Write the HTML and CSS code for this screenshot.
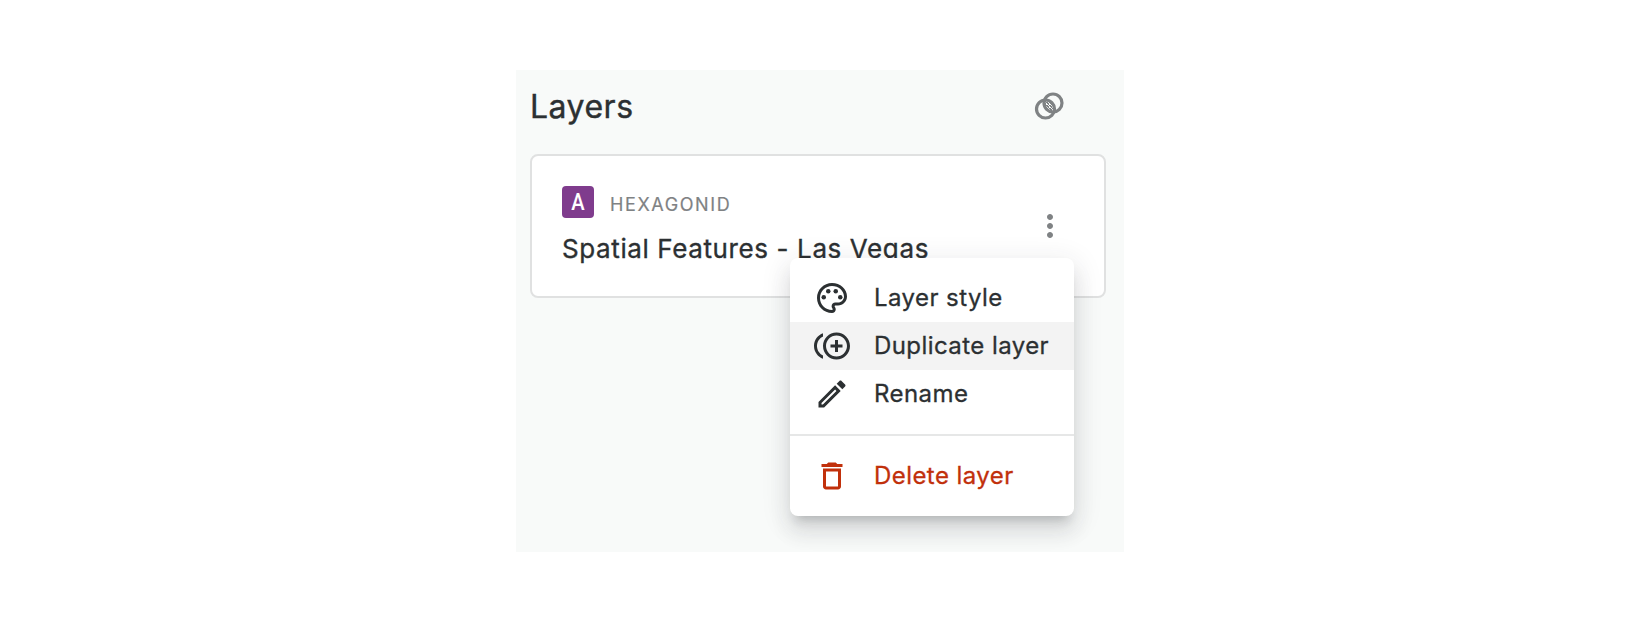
FILE: index.html
```html
<!DOCTYPE html>
<html lang="en">
<head>
<meta charset="utf-8">
<title>Layers</title>
<link rel="stylesheet" href="styles.css">
</head>
<body>
<section class="panel">
  <header class="panel-header">
    <h1 class="panel-title">Layers</h1>
    <svg class="blend-icon" viewBox="0 0 36 36">
      <defs>
        <pattern id="dots" width="3" height="3" patternUnits="userSpaceOnUse"><path d="M0 0h2v1H0zM1 1h1v1H1zM2 2h1v1H2zM0 2h1v1H0z" fill="#7f8284"/></pattern>
        <clipPath id="left"><circle cx="13.500" cy="21" r="9"/></clipPath>
      </defs>
      <circle cx="21" cy="15" r="9" fill="url(#dots)" clip-path="url(#left)"/>
      <circle cx="13.500" cy="21" r="9" fill="none" stroke="#7f8284" stroke-width="3.200"/>
      <circle cx="21" cy="15" r="9" fill="none" stroke="#7f8284" stroke-width="3.200"/>
    </svg>
  </header>
  <article class="card">
    <div class="card-info">
      <div class="card-source"><span class="badge"><span class="badge-letter">A</span></span><span class="source-type">HEXAGONID</span></div>
      <h2 class="card-title">Spatial Features - Las Vegas</h2>
    </div>
    <svg class="more-icon" viewBox="0 0 24 24"><path d="M12 8c1.100 0 2-.9 2-2s-.9-2-2-2-2 .9-2 2 .9 2 2 2zm0 2c-1.100 0-2 .9-2 2s.9 2 2 2 2-.9 2-2-.9-2-2-2zm0 6c-1.100 0-2 .9-2 2s.9 2 2 2 2-.9 2-2-.9-2-2-2z"/></svg>
  </article>
  <ul class="menu">
    <li class="menu-item">
      <svg class="menu-icon" viewBox="0 0 24 24"><path d="M12 22C6.490 22 2 17.510 2 12S6.490 2 12 2s10 4.040 10 9c0 3.310-2.690 6-6 6h-1.770c-.28 0-.5.22-.5.5 0 .12.05.23.13.33.41.47.64 1.060.64 1.670 0 1.380-1.120 2.500-2.500 2.500zm0-18c-4.410 0-8 3.590-8 8s3.590 8 8 8c.28 0 .5-.22.5-.5 0-.16-.08-.28-.14-.35-.41-.46-.63-1.050-.63-1.650 0-1.380 1.120-2.500 2.500-2.500H16c2.210 0 4-1.790 4-4 0-3.860-3.590-7-8-7z"/><circle cx="6.500" cy="11.500" r="1.500"/><circle cx="9.500" cy="7.500" r="1.500"/><circle cx="14.500" cy="7.500" r="1.500"/><circle cx="17.500" cy="11.500" r="1.500"/></svg>
      <span class="menu-label">Layer style</span>
    </li>
    <li class="menu-item menu-item-active">
      <svg class="menu-icon" viewBox="0 0 24 24"><path d="M16 8h-2v3h-3v2h3v3h2v-3h3v-2h-3zM2 12c0-2.790 1.640-5.200 4.010-6.320V3.520C2.520 4.760 0 8.090 0 12s2.520 7.240 6.010 8.480v-2.160C3.640 17.200 2 14.790 2 12zm13-9c-4.960 0-9 4.040-9 9s4.040 9 9 9 9-4.040 9-9-4.040-9-9-9zm0 16c-3.860 0-7-3.140-7-7s3.140-7 7-7 7 3.140 7 7-3.140 7-7 7z"/></svg>
      <span class="menu-label">Duplicate layer</span>
    </li>
    <li class="menu-item">
      <svg class="menu-icon" viewBox="0 0 24 24"><path d="M14.060 9.020l.92.920L5.920 19H5v-.92l9.060-9.060M17.660 3c-.25 0-.51.1-.7.290l-1.830 1.830 3.750 3.750 1.830-1.830c.39-.39.39-1.020 0-1.410l-2.340-2.340c-.2-.2-.45-.29-.71-.29zm-3.600 3.190L3 17.250V21h3.750L17.810 9.940l-3.750-3.750z"/></svg>
      <span class="menu-label">Rename</span>
    </li>
    <li class="menu-divider"></li>
    <li class="menu-item menu-item-danger">
      <svg class="menu-icon" viewBox="0 0 24 24"><path d="M6 19c0 1.100.9 2 2 2h8c1.100 0 2-.9 2-2V7H6v12zM8 9h8v10H8V9zm7.500-5-1-1h-5l-1 1H5v2h14V4z"/></svg>
      <span class="menu-label">Delete layer</span>
    </li>
  </ul>
</section>
</body>
</html>
```
FILE: styles.css
```css
body {
  margin: 0;
  padding: 70px 516px;
  background: #fff;
  color: #2c3032;
  font-family: Inter, "Liberation Sans", sans-serif;
}
.panel {
  position: relative;
  box-sizing: border-box;
  width: 608px;
  height: 482px;
  padding: 0 18px 0 14px;
  overflow: hidden;
  background: #f8faf9;
}
.panel-header {
  display: flex;
  align-items: center;
  justify-content: space-between;
  height: 72px;
  margin-bottom: 12px;
  padding-right: 38px;
}
.panel-title {
  margin: 0;
  padding-top: 2px;
  font-size: 32px;
  font-weight: 400;
  letter-spacing: .5px;
  line-height: 48px;
  -webkit-text-stroke: .4px;
}
.blend-icon {
  width: 36px;
  height: 36px;
}
.card {
  box-sizing: border-box;
  display: flex;
  align-items: center;
  justify-content: space-between;
  height: 144px;
  padding: 0 36px 0 30px;
  border: 2px solid #e0e1e1;
  border-radius: 8px;
  background: #fff;
}
.card-source {
  display: flex;
  align-items: center;
  gap: 16px;
  height: 32px;
}
.badge {
  display: flex;
  align-items: center;
  justify-content: center;
  width: 32px;
  height: 32px;
  border-radius: 4px;
  background: #7f3c8d;
  color: #fff;
}
.badge-letter {
  font: 500 24px/32px Roboto, sans-serif;
  transform: scaleX(.84);
}
.source-type {
  padding-top: 4px;
  color: #7f8284;
  font-size: 18px;
  letter-spacing: 1.6px;
  -webkit-text-stroke: .2px;
}
.card-title {
  margin: 13px 0 -1px;
  font-size: 26px;
  font-weight: 400;
  letter-spacing: .61px;
  line-height: 36px;
  -webkit-text-stroke: .35px;
}
.more-icon {
  width: 36px;
  height: 36px;
  fill: #7f8284;
}
.menu {
  position: absolute;
  top: 188px;
  left: 274px;
  box-sizing: border-box;
  width: 284px;
  height: 258px;
  margin: 0;
  padding: 16px 0;
  border-radius: 8px;
  background: #fff;
  box-shadow: 0 10px 10px -6px rgba(44, 48, 50, .2), 0 16px 20px 2px rgba(44, 48, 50, .09), 0 6px 28px 4px rgba(44, 48, 50, .09);
  list-style: none;
}
.menu-item {
  display: flex;
  align-items: center;
  gap: 24px;
  height: 48px;
  padding-left: 24px;
  font-size: 24px;
  letter-spacing: .43px;
  white-space: nowrap;
}
.menu-label {
  padding-bottom: 2px;
  -webkit-text-stroke: .3px;
}
.menu-item-active {
  background: #f3f3f3;
}
.menu-item-danger {
  color: #c1300b;
}
.menu-icon {
  width: 36px;
  height: 36px;
  fill: currentColor;
}
.menu-divider {
  height: 2px;
  margin: 16px 0;
  background: #e6e7e7;
}
```
